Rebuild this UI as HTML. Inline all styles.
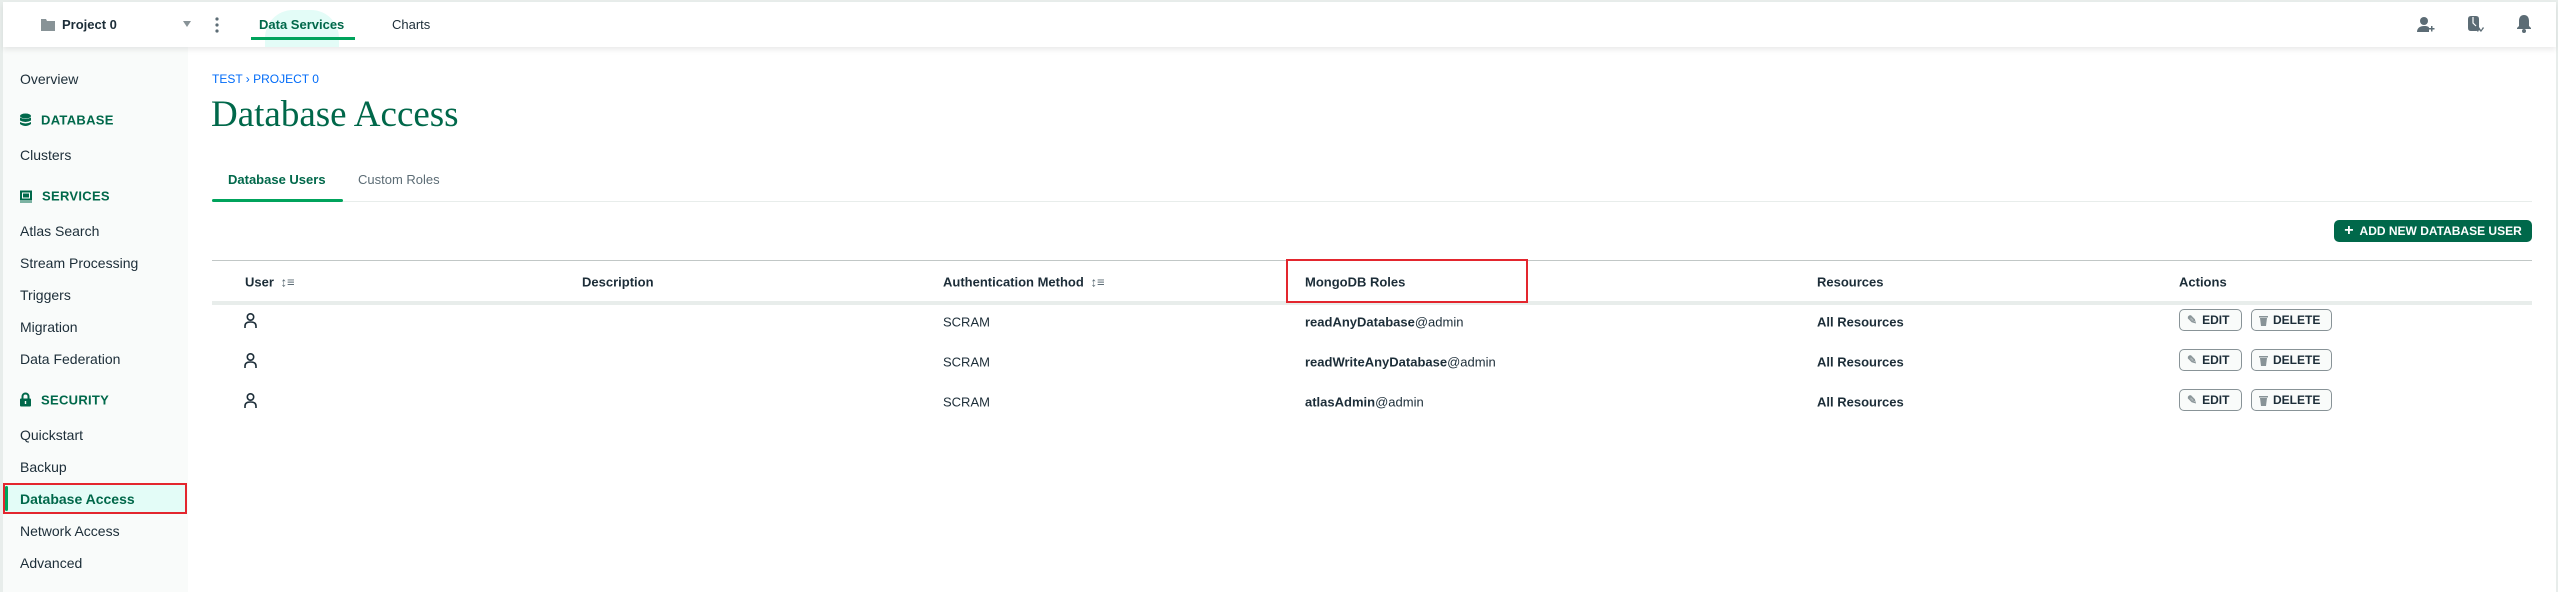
<!DOCTYPE html>
<html><head><meta charset="utf-8"><style>
*{margin:0;padding:0;box-sizing:border-box}
body{width:2558px;height:592px;position:relative;overflow:hidden;background:#fff;font-family:"Liberation Sans",sans-serif;color:#1c2d38}
.a{position:absolute;white-space:nowrap}
.side{position:absolute;left:3px;top:47px;width:185px;height:545px;background:#f9fbfa}
.si{position:absolute;left:20px;font-size:14px;color:#1c2d38;transform:translateY(-50%)}
.sh{position:absolute;left:20px;font-size:13px;color:#00684a;font-weight:bold;transform:translateY(-50%);letter-spacing:.3px}
.sh span{margin-left:10px}
.th{position:absolute;top:282px;font-size:13px;font-weight:bold;transform:translateY(-50%);color:#1c2d38}
.td{position:absolute;font-size:13px;transform:translateY(-50%);color:#1c2d38}
.btn{position:absolute;height:22px;border:1px solid #889397;border-radius:5px;background:#f9fbfa;font-size:12px;font-weight:bold;color:#1c2d38;display:flex;align-items:center;padding-left:7px;gap:5px}
</style></head><body>
<div class="a" style="left:0;top:0;width:2558px;height:2px;background:#e8edeb"></div>
<div class="a" style="left:0;top:0;width:3px;height:592px;background:#e8edeb"></div>
<div class="a" style="right:0;top:0;width:2px;height:592px;background:#e8edeb"></div>
<div class="a" style="left:3px;top:2px;width:2553px;height:45px;background:#fff;box-shadow:0 3px 5px rgba(0,0,0,.08);z-index:2">
<svg class="a" style="left:38px;top:17px" width="14" height="12" viewBox="0 0 14 12"><path d="M0 0h5l1 2h8v10H0z" fill="#889397"/></svg>
<div class="a" style="left:59px;top:15px;font-size:13px;font-weight:bold">Project 0</div>
<div class="a" style="left:180px;top:19px;width:0;height:0;border-left:4px solid transparent;border-right:4px solid transparent;border-top:6px solid #889397"></div>
<svg class="a" style="left:212px;top:15px" width="4" height="16"><circle cx="2" cy="2" r="1.6" fill="#5c6c75"/><circle cx="2" cy="8" r="1.6" fill="#5c6c75"/><circle cx="2" cy="14" r="1.6" fill="#5c6c75"/></svg>
<div class="a" style="left:262px;top:8px;width:74px;height:37px;border-radius:28px 28px 0 0;background:#e3fcf7"></div>
<div class="a" style="left:256px;top:15px;font-size:13px;font-weight:bold;color:#00684a">Data Services</div>
<div class="a" style="left:248px;top:35px;width:104px;height:3px;background:#00a35c"></div>
<div class="a" style="left:389px;top:15px;font-size:13px;color:#1c2d38">Charts</div>
<svg class="a" style="left:2414px;top:14px" width="18" height="18" viewBox="0 0 18 18" fill="#5c6c75"><circle cx="7" cy="5" r="4"/><path d="M0 16c0-4 3-6 7-6s5 1 5 2v4z"/><path d="M12 12h2v-2h1.5v2h2v1.5h-2v2H14v-2h-2z"/></svg>
<svg class="a" style="left:2464px;top:14px" width="18" height="18" viewBox="0 0 18 18" fill="#5c6c75"><path d="M1 3q0-3 3-3h5q3 0 3 3v9q0 3-3 3H4q-3 0-3-3z"/><path d="M6 1v6l3 3" stroke="#fff" stroke-width="1.2" fill="none"/><path d="M10 15l2-4 2 3 2-3 1 1-3 4-2-2-1 2z"/></svg>
<svg class="a" style="left:2513px;top:13px" width="16" height="18" viewBox="0 0 16 18" fill="#5c6c75"><path d="M8 0c3 0 5 2 5 6v5l2 2v1H1v-1l2-2V6c0-4 2-6 5-6z"/><circle cx="8" cy="16" r="2"/></svg>
</div>
<div class="side"></div>
<div class="si" style="top:79px">Overview</div>
<div class="sh" style="top:120px"><svg width="11" height="13" viewBox="0 0 11 13" style="vertical-align:-2px"><ellipse cx="5.5" cy="2.5" rx="5.5" ry="2.5" fill="#00684a"/><path d="M0 4q5.5 3 11 0v3q-5.5 3-11 0zM0 8.5q5.5 3 11 0v2q-5.5 4-11 0z" fill="#00684a"/></svg><span>DATABASE</span></div>
<div class="si" style="top:155px">Clusters</div>
<div class="sh" style="top:196px"><svg width="12" height="12" viewBox="0 0 12 12" style="vertical-align:-2px"><path d="M0 0h12v10H0z" fill="#00684a"/><path d="M2 2h8v6H2z" fill="#f9fbfa"/><path d="M3 3h6v4H3z" fill="#00684a"/><path d="M0 11h12v1H0z" fill="#00684a"/></svg><span>SERVICES</span></div>
<div class="si" style="top:231px">Atlas Search</div>
<div class="si" style="top:263px">Stream Processing</div>
<div class="si" style="top:295px">Triggers</div>
<div class="si" style="top:327px">Migration</div>
<div class="si" style="top:359px">Data Federation</div>
<div class="sh" style="top:400px"><svg width="11" height="14" viewBox="0 0 11 14" style="vertical-align:-2px"><path d="M2.5 6V4a3 3 0 0 1 6 0v2" stroke="#00684a" stroke-width="2" fill="none"/><rect x="0" y="6" width="11" height="8" rx="1" fill="#00684a"/><rect x="4.8" y="8.5" width="1.4" height="3" fill="#f9fbfa"/></svg><span>SECURITY</span></div>
<div class="si" style="top:435px">Quickstart</div>
<div class="si" style="top:467px">Backup</div>
<div class="a" style="left:3px;top:483px;width:184px;height:31px;background:#e3fcf7;border:2px solid #e3262e"></div>
<div class="a" style="left:5px;top:486px;width:3px;height:25px;background:#00a35c;border-radius:2px"></div>
<div class="si" style="top:499px;font-weight:bold;color:#00684a">Database Access</div>
<div class="si" style="top:531px">Network Access</div>
<div class="si" style="top:563px">Advanced</div>
<div class="a" style="left:212px;top:72px;font-size:12px;color:#016bf8">TEST › PROJECT 0</div>
<div class="a" style="left:211px;top:93px;font-size:37px;font-family:'Liberation Serif',serif;color:#00684a">Database Access</div>
<div class="a" style="left:228px;top:172px;font-size:13px;font-weight:bold;color:#00684a">Database Users</div>
<div class="a" style="left:358px;top:172px;font-size:13px;color:#5c6c75">Custom Roles</div>
<div class="a" style="left:212px;top:201px;width:2320px;height:1px;background:#e8edeb"></div>
<div class="a" style="left:212px;top:199px;width:131px;height:3px;background:#00a35c;border-radius:2px"></div>
<div class="a" style="left:2334px;top:220px;width:198px;height:22px;background:#00684a;border-radius:5px;color:#fff;font-size:12px;font-weight:bold;display:flex;align-items:center;justify-content:center;gap:6px"><span style="font-size:16px;line-height:1">+</span>ADD NEW DATABASE USER</div>
<div class="a" style="left:212px;top:260px;width:2320px;height:1px;background:#c1c7c6"></div>
<div class="a" style="left:212px;top:301px;width:2320px;height:4px;background:#e8edeb"></div>
<div class="th" style="left:245px">User <span style="color:#5c6c75;margin-left:3px">↕≡</span></div>
<div class="th" style="left:582px">Description</div>
<div class="th" style="left:943px">Authentication Method <span style="color:#5c6c75;margin-left:3px">↕≡</span></div>
<div class="th" style="left:1305px">MongoDB Roles</div>
<div class="a" style="left:1286px;top:259px;width:242px;height:44px;border:2px solid #e3262e"></div>
<div class="th" style="left:1817px">Resources</div>
<div class="th" style="left:2179px">Actions</div>
<svg class="a" style="left:244px;top:313px" width="13" height="15" viewBox="0 0 13 15"><circle cx="6.5" cy="4" r="3.2" stroke="#1c2d38" stroke-width="1.6" fill="none"/><path d="M1 15v-2q0-4 5.5-4t5.5 4v2" stroke="#1c2d38" stroke-width="1.6" fill="none"/></svg>
<svg class="a" style="left:244px;top:353px" width="13" height="15" viewBox="0 0 13 15"><circle cx="6.5" cy="4" r="3.2" stroke="#1c2d38" stroke-width="1.6" fill="none"/><path d="M1 15v-2q0-4 5.5-4t5.5 4v2" stroke="#1c2d38" stroke-width="1.6" fill="none"/></svg>
<svg class="a" style="left:244px;top:393px" width="13" height="15" viewBox="0 0 13 15"><circle cx="6.5" cy="4" r="3.2" stroke="#1c2d38" stroke-width="1.6" fill="none"/><path d="M1 15v-2q0-4 5.5-4t5.5 4v2" stroke="#1c2d38" stroke-width="1.6" fill="none"/></svg>
<div class="td" style="left:943px;top:322px">SCRAM</div>
<div class="td" style="left:943px;top:362px">SCRAM</div>
<div class="td" style="left:943px;top:402px">SCRAM</div>
<div class="td" style="left:1305px;top:322px"><b>readAnyDatabase</b>@admin</div>
<div class="td" style="left:1305px;top:362px"><b>readWriteAnyDatabase</b>@admin</div>
<div class="td" style="left:1305px;top:402px"><b>atlasAdmin</b>@admin</div>
<div class="td" style="left:1817px;top:322px;font-weight:bold">All Resources</div>
<div class="td" style="left:1817px;top:362px;font-weight:bold">All Resources</div>
<div class="td" style="left:1817px;top:402px;font-weight:bold">All Resources</div>
<div class="btn" style="left:2179px;top:309px;width:63px"><span style="color:#889397">✎</span>EDIT</div>
<div class="btn" style="left:2251px;top:309px;width:81px"><svg width="9" height="11" viewBox="0 0 9 11"><path d="M0 1h9v1.5H0zM1 3h7l-1 8H2z" fill="#889397"/></svg>DELETE</div>
<div class="btn" style="left:2179px;top:349px;width:63px"><span style="color:#889397">✎</span>EDIT</div>
<div class="btn" style="left:2251px;top:349px;width:81px"><svg width="9" height="11" viewBox="0 0 9 11"><path d="M0 1h9v1.5H0zM1 3h7l-1 8H2z" fill="#889397"/></svg>DELETE</div>
<div class="btn" style="left:2179px;top:389px;width:63px"><span style="color:#889397">✎</span>EDIT</div>
<div class="btn" style="left:2251px;top:389px;width:81px"><svg width="9" height="11" viewBox="0 0 9 11"><path d="M0 1h9v1.5H0zM1 3h7l-1 8H2z" fill="#889397"/></svg>DELETE</div>
</body></html>
